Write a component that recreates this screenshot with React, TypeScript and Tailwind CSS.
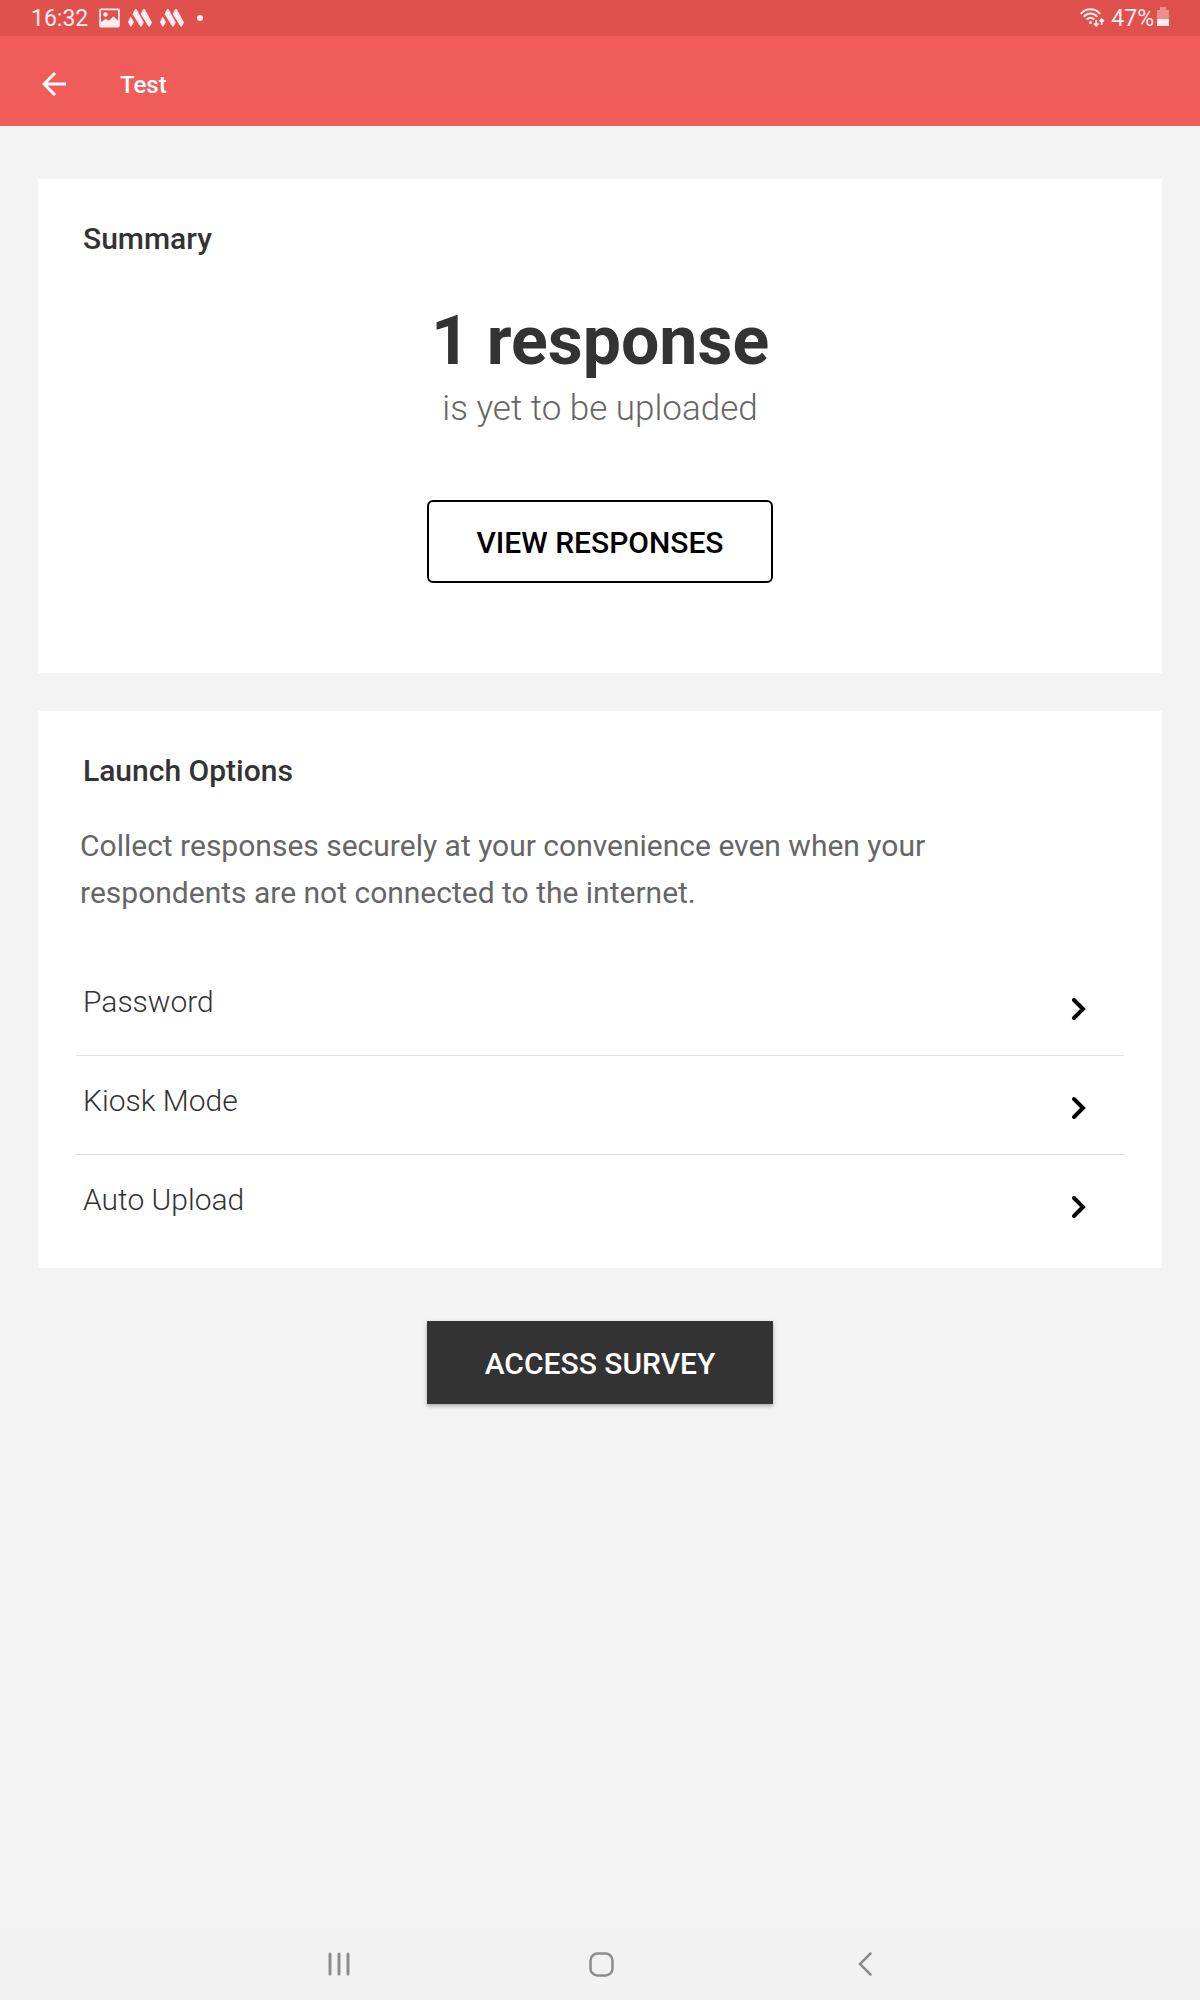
import { useState } from 'react';

const launchOptions = [
  { id: 'password', label: 'Password' },
  { id: 'kiosk', label: 'Kiosk Mode' },
  { id: 'auto-upload', label: 'Auto Upload' },
];

function PictureIcon() {
  return (
    <svg width="21" height="20" viewBox="0 0 21 20" aria-hidden="true">
      <path
        fill="currentColor"
        fillRule="evenodd"
        d="M2 0.5h17a1.8 1.8 0 0 1 1.8 1.8v15.4a1.8 1.8 0 0 1-1.8 1.8H2a1.8 1.8 0 0 1-1.8-1.8V2.3a1.8 1.8 0 0 1 1.8-1.8zM2 2.3v11.7l4.5-3 3.5 1.5 4.5-4 4.5 4V2.3z"
      />
      <circle cx="6.5" cy="6.5" r="2.2" fill="currentColor" />
    </svg>
  );
}

function StripesIcon() {
  return (
    <svg width="24" height="18" viewBox="0 0 24 18" fill="currentColor" aria-hidden="true">
      <path d="M2.7 7.5 6 13 3.5 17.5H2.3L0 13z" />
      <path d="M4.5 5 7.2 0H8.5L15.8 13.5 13.6 17.5H12.3z" />
      <path d="M12.7 5 15.4 0H16.7L24 13.5 21.8 17.5H20.5z" />
    </svg>
  );
}

function WifiIcon() {
  return (
    <svg width="25" height="20" viewBox="0 0 25 20" fill="none" stroke="currentColor" aria-hidden="true">
      <path
        strokeWidth="2"
        d="M.8 5.8C6-.4 15-.4 20.2 5.8M3.7 8.8c3.7-4.3 9.9-4.3 13.6 0M6.7 11.7c2.2-2.5 5.4-2.5 7.6 0"
      />
      <circle cx="10.5" cy="14.5" r="1.5" fill="currentColor" stroke="none" />
      <path strokeWidth="1.8" d="M16.2 12v6M14 15.5l2.2 2.3 2.2-2.3M21.7 17v-6M19.5 13.3l2.2-2.3 2.2 2.3" />
    </svg>
  );
}

function BatteryIcon() {
  return (
    <svg width="12" height="19" viewBox="0 0 12 19" fill="currentColor" aria-hidden="true">
      <path fillOpacity=".4" d="M3 0h6v3h3v9H0V3h3z" />
      <path d="M0 12h12v7H0z" />
    </svg>
  );
}

function StatusBar() {
  return (
    <div className="flex h-9 items-center justify-between bg-[#e0514d] px-[31px] text-[23px] text-[#ffeceb]">
      <div className="flex items-center">
        <span className="pt-[2px] leading-9">16:32</span>
        <div className="ml-[11px] flex items-center gap-2">
          <PictureIcon />
          <StripesIcon />
          <StripesIcon />
        </div>
        <span className="ml-[13px] size-[6px] rounded-full bg-current" />
      </div>
      <div className="flex items-center">
        <WifiIcon />
        <span className="ml-[6px] pt-[2px] leading-9">47%</span>
        <span className="ml-[3px] flex pb-[3px]">
          <BatteryIcon />
        </span>
      </div>
    </div>
  );
}

function AppBar({ title }: { title: string }) {
  return (
    <header className="flex h-[90px] items-center bg-[#f05c5a] pt-[6px] pl-[42px] text-white">
      <button type="button" aria-label="Back" className="cursor-pointer">
        <svg width="24" height="24" viewBox="0 0 24 24" fill="none" stroke="currentColor" strokeWidth="3" aria-hidden="true">
          <path d="M24 12H2M13 1 2 12l11 11" />
        </svg>
      </button>
      <h1 className="ml-[54px] pt-[2px] text-[24px] leading-8 font-medium">{title}</h1>
    </header>
  );
}

function NavBar() {
  return (
    <nav className="grid h-[72px] grid-cols-3 bg-[#f2f2f2] pr-[204px] pl-[208px] text-[#8c8c8c]">
      <button type="button" aria-label="Recent apps" className="flex items-center justify-center">
        <svg width="22" height="26" viewBox="0 0 22 26" stroke="currentColor" strokeWidth="3" aria-hidden="true">
          <path strokeLinecap="round" d="M2 3v20M11 3v20M20 3v20" />
        </svg>
      </button>
      <button type="button" aria-label="Home" className="flex items-center justify-center">
        <svg width="25" height="25" viewBox="0 0 25 25" fill="none" stroke="currentColor" strokeWidth="2.5" aria-hidden="true">
          <rect x="1.5" y="1.5" width="22" height="22" rx="7" />
        </svg>
      </button>
      <button type="button" aria-label="Back" className="flex items-center justify-center">
        <svg width="14" height="24" viewBox="0 0 14 24" fill="none" stroke="currentColor" strokeWidth="2.5" aria-hidden="true">
          <path strokeLinecap="round" d="M12.5 1.5 2 12l10.5 10.5" />
        </svg>
      </button>
    </nav>
  );
}

export default function App() {
  const [selected, setSelected] = useState<string | null>(null);

  return (
    <div className="flex min-h-screen flex-col bg-[#f3f3f3] font-[Roboto,sans-serif] text-[30px] text-[#333333]">
      <StatusBar />
      <AppBar title="Test" />

      <main className="flex flex-1 flex-col px-[38px] pt-[53px]">
        <section className="bg-white px-[38px] pt-10 pb-[90px]">
          <h2 className="px-[7px] leading-10 font-medium">Summary</h2>
          <div className="flex flex-col items-center text-center">
            <p className="mt-[42px] text-[68px] leading-[80px] font-bold">1 response</p>
            <p className="mt-[6px] text-[35px] leading-[44px] font-light text-[#666666]">
              is yet to be uploaded
            </p>
            <button
              type="button"
              className="mt-[69px] h-[83px] min-w-[346px] cursor-pointer rounded-md border-2 border-black pt-[2px] font-medium text-black"
            >
              VIEW RESPONSES
            </button>
          </div>
        </section>

        <section className="mt-[38px] bg-white px-[38px] pt-10 pb-12">
          <h2 className="px-[7px] leading-10 font-medium">Launch Options</h2>
          <p className="mt-[31px] pr-24 pl-1 leading-[47px] text-[#666666]">
            Collect responses securely at your convenience even when your respondents are not
            connected to the internet.
          </p>
          <ul className="mt-[41px] divide-y divide-[#e2e2e2]">
            {launchOptions.map((option) => (
              <li key={option.id} className="pt-[25px] pb-[33px] last:pb-0">
                <button
                  type="button"
                  aria-pressed={selected === option.id}
                  onClick={() => setSelected(option.id)}
                  className="flex w-full cursor-pointer items-end justify-between pr-[38px] pl-[7px] text-left leading-10 font-light"
                >
                  {option.label}
                  <svg width="15" height="26" viewBox="0 0 15 26" fill="none" stroke="black" strokeWidth="4" aria-hidden="true">
                    <path strokeLinecap="round" d="M3 4l9 9-9 9" />
                  </svg>
                </button>
              </li>
            ))}
          </ul>
        </section>

        <button
          type="button"
          className="mt-[53px] h-[83px] min-w-[346px] cursor-pointer self-center bg-[#333333] pt-[2px] font-medium text-white shadow-[0_2px_4px_rgba(0,0,0,0.3)]"
        >
          ACCESS SURVEY
        </button>
      </main>

      <NavBar />
    </div>
  );
}
